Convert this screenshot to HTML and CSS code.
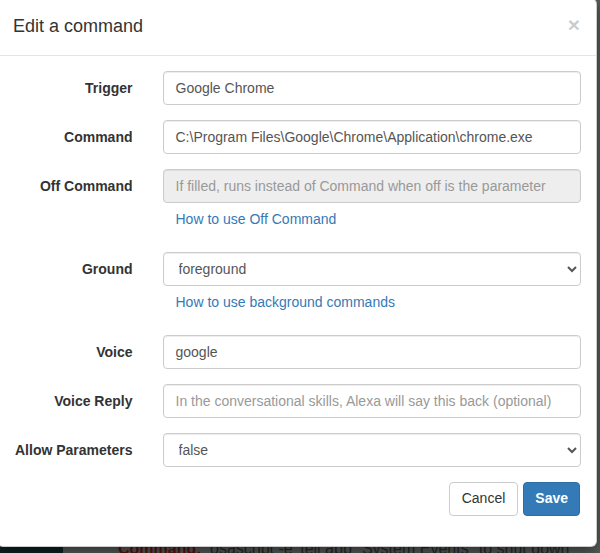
FILE: index.html
```html
<!DOCTYPE html>
<html>
<head>
<meta charset="utf-8">
<link rel="stylesheet" href="styles.css">
</head>
<body>
<div class="page">
  <div class="sidebar"></div>
  <div class="main">
    <div class="cmd-line"><span class="cmd-key">Command:</span> <span class="cmd-val">osascript -e 'tell app "System Events" to shut down'</span></div>
  </div>
</div>
<div class="modal">
  <div class="modal-header">
    <button class="close" type="button">&times;</button>
    <h4 class="modal-title">Edit a command</h4>
  </div>
  <div class="modal-body">
    <form class="form">
      <div class="form-group">
        <label class="control-label">Trigger</label>
        <div class="control"><input class="form-control" type="text" value="Google Chrome"></div>
      </div>
      <div class="form-group">
        <label class="control-label">Command</label>
        <div class="control"><input class="form-control" type="text" value="C:\Program Files\Google\Chrome\Application\chrome.exe"></div>
      </div>
      <div class="form-group">
        <label class="control-label">Off Command</label>
        <div class="control">
          <input class="form-control" type="text" disabled placeholder="If filled, runs instead of Command when off is the parameter">
          <div class="help-block"><a href="#">How to use Off Command</a></div>
        </div>
      </div>
      <div class="form-group">
        <label class="control-label">Ground</label>
        <div class="control">
          <select class="form-control"><option>foreground</option><option>background</option></select>
          <div class="help-block"><a href="#">How to use background commands</a></div>
        </div>
      </div>
      <div class="form-group">
        <label class="control-label">Voice</label>
        <div class="control"><input class="form-control" type="text" value="google"></div>
      </div>
      <div class="form-group">
        <label class="control-label">Voice Reply</label>
        <div class="control"><input class="form-control" type="text" placeholder="In the conversational skills, Alexa will say this back (optional)"></div>
      </div>
      <div class="form-group">
        <label class="control-label">Allow Parameters</label>
        <div class="control"><select class="form-control"><option>false</option><option>true</option></select></div>
      </div>
      <div class="actions">
        <button class="btn btn-default" type="button">Cancel</button>
        <button class="btn btn-primary" type="button">Save</button>
      </div>
    </form>
  </div>
</div>
</body>
</html>
```

FILE: styles.css
```css
* { box-sizing: border-box; }
html, body { margin: 0; padding: 0; height: 100%; overflow: hidden; }
body {
  font-family: "Liberation Sans", Arial, Helvetica, sans-serif;
  font-size: 14px;
  line-height: 1.42857;
  color: #333;
  background: #3d4240;
}
.page {
  display: flex;
  height: 553px;
}
.sidebar {
  width: 63px;
  background: #0e2224;
}
.main {
  flex: 1;
  background: #595e5b;
  padding-top: 538px;
  padding-left: 55px;
}
.cmd-line {
  font-size: 16px;
  white-space: nowrap;
}
.cmd-key { color: #5e1212; font-weight: bold; margin-right: 4px; }
.cmd-val { color: #272a29; }

.modal {
  position: absolute;
  top: -2px;
  left: -3px;
  width: 600px;
  background: #fff;
  border: 1px solid rgba(0,0,0,.2);
  border-radius: 6px;
  box-shadow: 0 5px 15px rgba(0,0,0,.5);
}
.modal-header {
  padding: 15px;
  border-bottom: 1px solid #e5e5e5;
}
.modal-title {
  margin: 0;
  font-size: 18px;
  font-weight: 500;
  line-height: 1.42857;
  color: #333;
}
.close {
  float: right;
  margin-top: 0;
  margin-right: 1px;
  padding: 0;
  border: 0;
  background: transparent;
  font-family: inherit;
  font-size: 21px;
  font-weight: bold;
  line-height: 1;
  color: #000;
  opacity: .2;
  text-shadow: 0 1px 0 #fff;
}
.modal-body { padding: 15px; }
.form { margin: 0 -15px; }
.form-group {
  display: grid;
  grid-template-columns: 25% 75%;
  margin-bottom: 15px;
}
.control-label {
  padding: 8px 15px 0;
  text-align: right;
  font-weight: bold;
  margin: 0;
}
.control { padding: 0 15px; }
.form-control {
  display: block;
  width: 100%;
  height: 34px;
  padding: 6px 12px;
  font-family: inherit;
  font-size: 14px;
  line-height: 1.42857;
  color: #555;
  background: #fff;
  border: 1px solid #ccc;
  border-radius: 4px;
  box-shadow: inset 0 1px 1px rgba(0,0,0,.075);
  margin: 0;
}
.form-control::placeholder { color: #999; opacity: 1; }
.form-control:disabled { background: #eee; cursor: not-allowed; }
select.form-control { padding-left: 11px; }
.help-block {
  margin: 6px 0 8px;
  padding-left: 13px;
  line-height: 20px;
}
.help-block a { color: #337ab7; text-decoration: none; }
.actions {
  display: flex;
  justify-content: flex-end;
  gap: 5px;
  padding: 0 16px 0 15px;
  margin-bottom: 15px;
}
.btn {
  height: 34px;
  padding: 6px 12px;
  font-family: inherit;
  font-size: 14px;
  line-height: 1.42857;
  border: 1px solid transparent;
  border-radius: 4px;
}
.btn-default { color: #333; background: #fff; border-color: #ccc; }
.btn-primary { color: #fff; background: #337ab7; border-color: #2e6da4; font-weight: bold; padding: 6px 11px; }
```
